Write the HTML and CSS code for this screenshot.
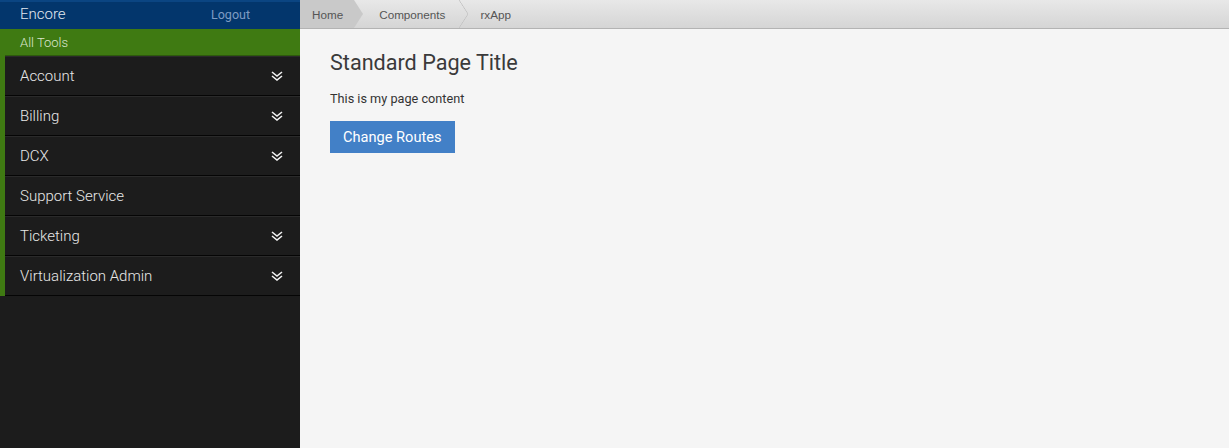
FILE: index.html
```html
<!DOCTYPE html>
<html>
<head>
<meta charset="utf-8">
<link rel="stylesheet" href="styles.css">
</head>
<body>
<div class="app">
  <nav class="sidebar">
    <div class="brand">
      <span class="brand-name">Encore</span>
      <a class="logout">Logout</a>
    </div>
    <div class="tools">
      <div class="tools-title">All Tools</div>
      <ul class="menu">
        <li class="item"><span>Account</span><svg class="chev" viewBox="0 0 12 10"><polyline points="1,1 6,5 11,1"/><polyline points="1,5 6,9 11,5"/></svg></li>
        <li class="item"><span>Billing</span><svg class="chev" viewBox="0 0 12 10"><polyline points="1,1 6,5 11,1"/><polyline points="1,5 6,9 11,5"/></svg></li>
        <li class="item"><span>DCX</span><svg class="chev" viewBox="0 0 12 10"><polyline points="1,1 6,5 11,1"/><polyline points="1,5 6,9 11,5"/></svg></li>
        <li class="item"><span>Support Service</span></li>
        <li class="item"><span>Ticketing</span><svg class="chev" viewBox="0 0 12 10"><polyline points="1,1 6,5 11,1"/><polyline points="1,5 6,9 11,5"/></svg></li>
        <li class="item"><span>Virtualization Admin</span><svg class="chev" viewBox="0 0 12 10"><polyline points="1,1 6,5 11,1"/><polyline points="1,5 6,9 11,5"/></svg></li>
      </ul>
    </div>
  </nav>
  <main class="main">
    <div class="crumbs">
      <a class="crumb crumb-home">Home</a>
      <a class="crumb crumb-mid">Components</a>
      <span class="crumb crumb-last">rxApp</span>
    </div>
    <section class="content">
      <h1 class="title">Standard Page Title</h1>
      <p class="text">This is my page content</p>
      <button class="btn">Change Routes</button>
    </section>
  </main>
</div>
</body>
</html>
```
FILE: styles.css
```css
* { box-sizing: border-box; }
html, body { margin: 0; padding: 0; height: 100%; }
body { font-family: Roboto, "Liberation Sans", sans-serif; background: #f5f5f5; }
.app { display: flex; height: 448px; }
.sidebar { width: 300px; flex: none; background: #1c1c1c; display: flex; flex-direction: column; }
.brand { height: 29px; background: #03366c; border-top: 2px solid #0b4582; display: flex; align-items: center; justify-content: space-between; padding: 0 50px 3px 20px; }
.brand-name { color: #e2e8f0; font-size: 15px; font-weight: 300; }
.logout { color: #7f9cc4; font-size: 12.5px; }
.tools { background: #3f7a12; padding-left: 5px; }
.tools-title { height: 27px; color: #dbe6cf; font-size: 13px; font-weight: 300; line-height: 28px; padding-left: 15px; border-bottom: 1px solid #2e5a0d; }
.menu { list-style: none; margin: 0; padding: 0; background: #1c1c1c; }
.item { height: 40px; border-top: 1px solid #2a2a2a; border-bottom: 1px solid #050505; display: flex; align-items: center; justify-content: space-between; padding: 0 17px 0 15px; color: #e8e8e8; font-size: 15px; font-weight: 300; }
.chev { width: 12px; height: 10px; fill: none; stroke: #f2f2f2; stroke-width: 1.6; }
.main { flex: 1; display: flex; flex-direction: column; }
.crumbs { height: 29px; background: linear-gradient(#e8e8e8, #d5d5d5); border-bottom: 1px solid #b3b3b3; display: flex; align-items: stretch; font-family: "Liberation Sans", Arial, sans-serif; font-size: 11.7px; color: #555; }
.crumb { position: relative; display: flex; align-items: center; }
.crumb-home { background: #c9c9c9; padding: 0 11px 0 12px; margin-right: 25px; }
.crumb-home::after { content: ""; position: absolute; right: -9px; top: 0; border-left: 9px solid #c9c9c9; border-top: 14px solid transparent; border-bottom: 14px solid transparent; }
.crumb-mid { padding-right: 35px; }
.crumb-mid::after { content: ""; position: absolute; right: 12px; top: 0; width: 9px; height: 28px; background: linear-gradient(to top right, transparent 46%, #c2c2c2 50%, transparent 55%) top / 9px 14px no-repeat, linear-gradient(to bottom right, transparent 46%, #c2c2c2 50%, transparent 55%) bottom / 9px 14px no-repeat; }
.content { padding: 20px 30px; }
.title { margin: 0; font-weight: 400; font-size: 21.6px; color: #3a3a3a; line-height: 28px; }
.text { margin: 14px 0 14px; font-size: 12.7px; color: #333; line-height: 16px; }
.btn { background: #4280c7; color: #fff; border: none; font-family: Roboto, sans-serif; font-size: 14.6px; height: 32px; padding: 0 13px; }
```
